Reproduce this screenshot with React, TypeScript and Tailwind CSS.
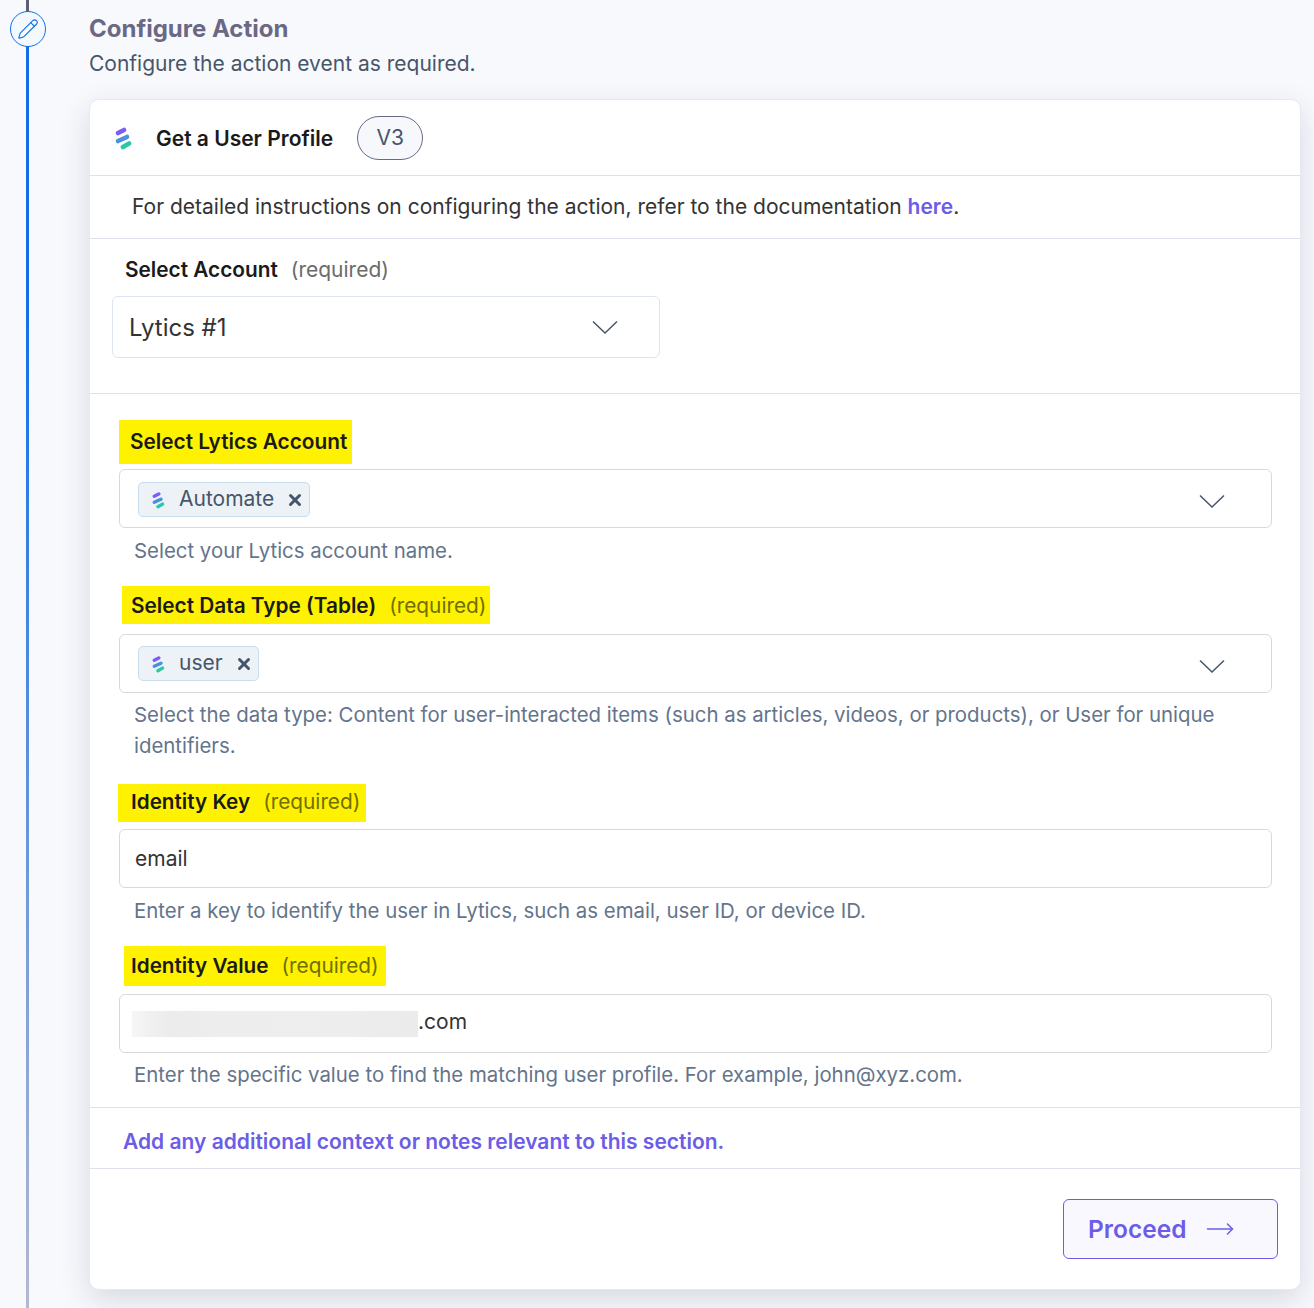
import { MoveRight, Pencil, X } from "lucide-react";

const font = "font-['Inter',sans-serif]";

function LyticsLogo({ className }: { className: string }) {
  return (
    <svg className={className} viewBox="0 0 18 24" fill="none" strokeLinecap="round" strokeWidth="4.6">
      <path d="M4 7 L10 4" stroke="#7c5cf6" />
      <path d="M4 15 L13 11" stroke="#4a90e2" />
      <path d="M9 21 L15 17.5" stroke="#2cc6a8" />
    </svg>
  );
}

function Chevron({ className = "" }: { className?: string }) {
  return (
    <svg className={className} width="26" height="15" viewBox="0 0 26 15" fill="none" stroke="#475569" strokeWidth="1.5">
      <path d="M1 1.5 L13 13 L25 1.5" />
    </svg>
  );
}

function Tag({ label }: { label: string }) {
  return (
    <div className="flex h-[35px] items-center rounded-[5px] border border-[#c9dcf0] bg-[#edf2f7] pl-[12px] pr-[5px]">
      <LyticsLogo className="h-[18px] w-[14px]" />
      <span className="mb-[2px] ml-[14px] text-[21px] leading-none text-[#475569]">{label}</span>
      <X className="ml-[12px] mt-[1px] h-[18px] w-[18px] text-[#475569]" strokeWidth={4} />
    </div>
  );
}

function FieldBox({ children }: { children: React.ReactNode }) {
  return (
    <div className="flex h-[59px] items-center justify-between rounded-[6px] border border-[#d9d9d9] bg-white">
      {children}
    </div>
  );
}

function Required({ className = "" }: { className?: string }) {
  return <span className={`text-[20.8px] font-normal text-[#6f6f00] ${className}`}>(required)</span>;
}

export default function App() {
  return (
    <div className={`${font} relative h-[1308px] w-[1314px] overflow-hidden bg-[#f8f9fd]`}>
      {/* Timeline rail */}
      <div className="absolute left-[26px] top-0 h-[12px] w-[3px] bg-[#5f5d70]" />
      <div className="absolute left-[26px] top-[45px] h-[1263px] w-[3px] bg-[linear-gradient(to_bottom,#0f6fe8_0%,#0f6fe8_20%,#b4b8cf_100%)]" />
      <div className="absolute left-[10px] top-[11px] flex h-[36px] w-[36px] items-center justify-center rounded-full border-[1.5px] border-[#0f6fe8] bg-[#f3f9ff]">
        <Pencil className="h-[22px] w-[22px] text-[#0f6fe8]" strokeWidth={1.2} />
      </div>

      <div className="pl-[89px] pr-[13px]">
        <h1 className="pt-[13px] text-[24px] font-bold leading-[32px] text-[#6a6885]">Configure Action</h1>
        <p className="mt-[4px] text-[21px] leading-[30px] text-[#475569]">Configure the action event as required.</p>

        <div className="mt-[20px] h-[1191px] rounded-[10px] border border-[#e7e9f2] bg-white shadow-[0_10px_30px_rgba(30,40,70,0.15)]">
          <div className="flex h-[76px] items-center border-b border-[#dde1ee] pl-[24px]">
            <LyticsLogo className="h-[24px] w-[18px]" />
            <span className="ml-[24px] mt-[2px] text-[21px] font-semibold text-[#1a1a1a]">Get a User Profile</span>
            <span className="ml-[24px] flex h-[44px] w-[66px] items-center justify-center rounded-full border border-[#6a6885] bg-[#f7f8fc] text-[21px] text-[#475569]">
              V3
            </span>
          </div>

          <div className="flex h-[63px] items-center border-b border-[#dde1ee] pl-[42px] text-[21px] text-[#333333]">
            <span>
              For detailed instructions on configuring the action, refer to the documentation{" "}
              <span className="font-semibold text-[#6c5ce7]">here</span>.
            </span>
          </div>

          <div className="h-[155px] border-b border-[#dde1ee] pl-[22px]">
            <div className="pl-[13px] pt-[16px] text-[20.8px] leading-[30px]">
              <span className="font-semibold text-[#1a1a1a]">Select Account</span>
              <span className="ml-[13px] text-[21px] text-[#6b6b6b]">(required)</span>
            </div>
            <div className="mt-[11px] flex h-[62px] w-[548px] items-center justify-between rounded-[6px] border border-[#dde3f2] pl-[16px] pr-[41px]">
              <span className="pt-[2px] text-[24px] text-[#333333]">Lytics #1</span>
              <Chevron />
            </div>
          </div>

          <div className="pl-[29px] pr-[28px]">
            {/* Select Lytics Account */}
            <div className="pt-[26px]">
              <div className="flex h-[44px] w-[233px] items-center bg-[#fff200] pl-[11px] text-[20.8px] font-semibold text-[#1a1a1a]">
                Select Lytics Account
              </div>
            </div>
            <div className="mt-[5px]">
              <FieldBox>
                <div className="pl-[18px] pt-[2px]"><Tag label="Automate" /></div>
                <Chevron className="mr-[46px] mt-[6px]" />
              </FieldBox>
            </div>
            <p className="ml-[15px] mt-[7px] text-[20.4px] leading-[31px] text-[#64748b]">Select your Lytics account name.</p>

            {/* Select Data Type */}
            <div className="mt-[20px] ml-[3px] flex h-[38px] w-[368px] items-center bg-[#fff200] pl-[9px] pt-[2px] text-[20.8px] font-semibold text-[#1a1a1a]">
              Select Data Type (Table)
              <Required className="ml-[13px]" />
            </div>
            <div className="mt-[10px]">
              <FieldBox>
                <div className="pl-[18px]"><Tag label="user" /></div>
                <Chevron className="mr-[46px] mt-[6px]" />
              </FieldBox>
            </div>
            <p className="ml-[15px] mt-[6px] text-[20.4px] leading-[31px] text-[#64748b]">
              Select the data type: Content for user-interacted items (such as articles, videos, or products), or User for unique identifiers.
            </p>

            {/* Identity Key */}
            <div className="mt-[23px] -ml-[1px] flex h-[38px] w-[248px] items-center bg-[#fff200] pb-[2px] pl-[13px] text-[20.7px] font-semibold text-[#1a1a1a]">
              Identity Key
              <Required className="ml-[13px]" />
            </div>
            <div className="mt-[7px]">
              <FieldBox>
                <span className="pl-[15px] text-[21px] text-[#333333]">email</span>
              </FieldBox>
            </div>
            <p className="ml-[15px] mt-[7px] text-[20.4px] leading-[31px] text-[#64748b]">
              Enter a key to identify the user in Lytics, such as email, user ID, or device ID.
            </p>

            {/* Identity Value */}
            <div className="mt-[20px] ml-[5px] flex h-[40px] w-[262px] items-center bg-[#fff200] pl-[7px] text-[20.7px] font-semibold text-[#1a1a1a]">
              Identity Value
              <Required className="ml-[13px]" />
            </div>
            <div className="mt-[8px]">
              <FieldBox>
                <div className="flex items-center pl-[12px]">
                  <div className="h-[26px] w-[286px] bg-[linear-gradient(to_right,#f6f6f6,#ececec_12%,#eeeeee_60%,#ebebeb)]" />
                  <span className="mb-[4px] text-[21px] text-[#333333]">.com</span>
                </div>
              </FieldBox>
            </div>
            <p className="ml-[15px] mt-[6px] text-[20.4px] leading-[31px] text-[#64748b]">
              Enter the specific value to find the matching user profile. For example, john@xyz.com.
            </p>
          </div>

          <div className="mt-[17px] flex h-[62px] items-center border-y border-[#dde1ee] pl-[33px] pt-[8px] text-[21px] font-semibold text-[#6c5ce7]">
            Add any additional context or notes relevant to this section.
          </div>

          <div className="flex justify-end pr-[22px] pt-[30px]">
            <button className="flex h-[60px] w-[215px] items-center rounded-[6px] border border-[#6c5ce7] bg-[#f9f8ff] pl-[24px] text-[24.5px] font-semibold text-[#6c5ce7]">
              Proceed
              <MoveRight className="ml-[19px] h-[30px] w-[30px]" strokeWidth={1.2} />
            </button>
          </div>
        </div>
      </div>
    </div>
  );
}
